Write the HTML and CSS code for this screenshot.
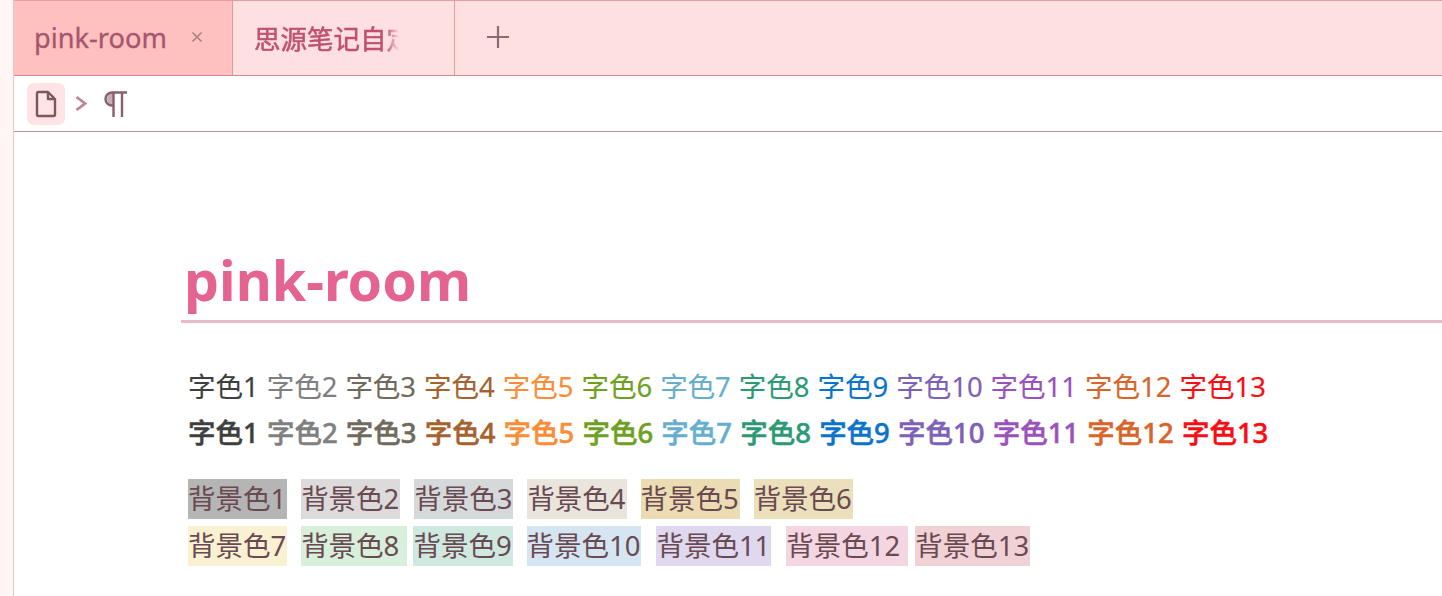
FILE: index.html
```html
<!DOCTYPE html>
<html lang="zh-CN">
<head>
    <meta charset="UTF-8">
    <title>pink-room</title>
    <link rel="stylesheet" href="styles.css">
</head>
<body>
    <div class="app">
        <div class="side"></div>
        <div class="main">
            <div class="tabbar">
                <div class="tab tab-active">
                    <span class="tab-title">pink-room</span>
                    <svg class="tab-close" width="12" height="12" viewBox="0 0 12 12"><path d="M1.500 1.500l9 9M10.500 1.500l-9 9" fill="none" stroke="#a98088" stroke-width="1.600"/></svg>
                </div>
                <div class="tab tab-other">
                    <span class="tab-title tab-fade">思源笔记自定</span>
                </div>
                <div class="tab-add">
                    <svg width="26" height="26" viewBox="0 0 26 26"><path d="M13 2v22M2 13h22" fill="none" stroke="#8c6a72" stroke-width="2.200"/></svg>
                </div>
            </div>
            <div class="crumbs">
                <div class="crumb-doc">
                    <svg width="22" height="28" viewBox="0 0 22 28"><path d="M2 3.500a1.500 1.500 0 0 1 1.500-1.500h9.500l7 7v15.500a1.500 1.500 0 0 1-1.500 1.500h-15a1.500 1.500 0 0 1-1.500-1.500zM13 2v7h7" fill="none" stroke="#7d5560" stroke-width="2.400" stroke-linejoin="round"/></svg>
                </div>
                <svg class="crumb-arrow" width="12" height="17" viewBox="0 0 12 17"><path d="M1.500 2l8.500 6.500-8.500 6.500" fill="none" stroke="#b98595" stroke-width="2.800"/></svg>
                <svg class="crumb-para" width="23" height="26" viewBox="0 0 23 26"><path d="M23 1.500H8a6.500 6.500 0 0 0 0 13h2" fill="none" stroke="#8a5f6c" stroke-width="2.400"/><path d="M9 2a6 6 0 0 0 0 12z" fill="#8a5f6c" fill-opacity="0.500"/><path d="M9.500 1v25M18 1v25" fill="none" stroke="#8a5f6c" stroke-width="2.400"/></svg>
            </div>
            <div class="doc">
                <h1 class="doc-title">pink-room</h1>
                <div class="fg-rows">
                    <p class="fg-row">
                        <span class="fg1">字色1</span> <span class="fg2">字色2</span> <span class="fg3">字色3</span> <span class="fg4">字色4</span> <span class="fg5">字色5</span> <span class="fg6">字色6</span> <span class="fg7">字色7</span> <span class="fg8">字色8</span> <span class="fg9">字色9</span> <span class="fg10">字色10</span> <span class="fg11">字色11</span> <span class="fg12">字色12</span> <span class="fg13">字色13</span>
                    </p>
                    <p class="fg-row fg-bold">
                        <span class="fg1">字色1</span> <span class="fg2">字色2</span> <span class="fg3">字色3</span> <span class="fg4">字色4</span> <span class="fg5">字色5</span> <span class="fg6">字色6</span> <span class="fg7">字色7</span> <span class="fg8">字色8</span> <span class="fg9">字色9</span> <span class="fg10">字色10</span> <span class="fg11">字色11</span> <span class="fg12">字色12</span> <span class="fg13">字色13</span>
                    </p>
                </div>
                <div class="bg-rows">
                    <div class="bg-row">
                        <span class="bg1">背景色1</span>
                        <span class="bg2">背景色2</span>
                        <span class="bg3">背景色3</span>
                        <span class="bg4">背景色4</span>
                        <span class="bg5">背景色5</span>
                        <span class="bg6">背景色6</span>
                    </div>
                    <div class="bg-row">
                        <span class="bg7">背景色7</span>
                        <span class="bg8 bg-trail">背景色8&nbsp;</span>
                        <span class="bg9">背景色9</span>
                        <span class="bg10">背景色10</span>
                        <span class="bg11">背景色11</span>
                        <span class="bg12 bg-trail">背景色12&nbsp;</span>
                        <span class="bg13">背景色13</span>
                    </div>
                </div>
            </div>
        </div>
    </div>
</body>
</html>
```
FILE: styles.css
```css
html, body {
    margin: 0;
    height: 596px;
    overflow: hidden;
    background: #fff;
    font-family: "Noto Sans", "Noto Sans CJK SC", sans-serif;
}
.app {
    display: flex;
    height: 596px;
}
.side {
    width: 13px;
    flex: none;
    background: #fff6f5;
    border-right: 1px solid #f0c4c6;
}
.main {
    flex: 1;
    min-width: 0;
}
.tabbar {
    display: flex;
    height: 76px;
    box-sizing: border-box;
    background: #ffe0e1;
    border-top: 1px solid #e39ea2;
    border-bottom: 1px solid #d08a92;
}
.tab {
    display: flex;
    align-items: center;
    box-sizing: border-box;
    border-right: 1px solid #d99aa2;
    padding-bottom: 2px;
}
.tab-active {
    width: 219px;
    padding-left: 20px;
    background: #ffc0c0;
    color: #a5566c;
    font-size: 27.200px;
    -webkit-text-stroke: 0.300px;
}
.tab-other {
    width: 222px;
    padding-left: 21px;
    color: #c05070;
    font-size: 26.500px;
    -webkit-text-stroke: 0.500px;
}
.tab-close {
    margin-left: 24px;
}
.tab-fade {
    white-space: nowrap;
    -webkit-mask-image: linear-gradient(to right, #000 132px, transparent 145px);
    mask-image: linear-gradient(to right, #000 132px, transparent 145px);
}
.tab-add {
    display: flex;
    align-items: center;
    padding-left: 30px;
    padding-bottom: 2px;
}
.crumbs {
    display: flex;
    align-items: center;
    height: 55px;
    padding-left: 13px;
    border-bottom: 1px solid #b9979f;
}
.crumb-doc {
    display: flex;
    align-items: center;
    justify-content: center;
    width: 38px;
    height: 42px;
    border-radius: 7px;
    background: #ffe3e5;
}
.crumb-arrow {
    margin-left: 10px;
}
.crumb-para {
    margin-left: 17px;
}
.doc {
    padding: 112px 0 0 167px;
}
.doc-title {
    margin: 0;
    padding: 0 0 4px 3px;
    border-bottom: 3px solid #e8b9c9;
    font-size: 55.500px;
    line-height: 72px;
    font-weight: 700;
    color: #e4638f;
}
.fg-rows {
    padding: 41px 0 0 7px;
}
.fg-row {
    margin: 0;
    height: 46px;
    font-size: 27.500px;
    line-height: 46px;
    word-spacing: 0.800px;
    white-space: nowrap;
    -webkit-text-stroke: 0.150px;
}
.fg-bold {
    word-spacing: 1px;
    font-weight: 500;
    -webkit-text-stroke: 0.500px;
}
.fg1 { color: #3f3f3f; }
.fg2 { color: #7f7f7f; }
.fg3 { color: #6f6a5c; }
.fg4 { color: #a5622e; }
.fg5 { color: #fb8c36; }
.fg6 { color: #6ea01f; }
.fg7 { color: #66aecd; }
.fg8 { color: #2b9a74; }
.fg9 { color: #0a73cc; }
.fg10 { color: #7e60b8; }
.fg11 { color: #9b51bc; }
.fg12 { color: #d9642a; }
.fg13 { color: #fb0b12; }
.bg-rows {
    padding: 23px 0 0 7px;
}
.bg-row {
    display: flex;
    gap: 14px;
    height: 47px;
    font-size: 27.500px;
    line-height: 40px;
    color: #6a4a52;
}
.bg-row span {
    height: 40px;
    padding-right: 0.900px;
}
.bg-row .bg-trail {
    margin-right: -7px;
}
.bg-row .bg8 {
    margin-right: -8px;
}
.bg-row .bg10, .bg-row .bg11 {
    margin-right: 1px;
}
.bg1 { background: #b5b5b5; }
.bg2 { background: #dcdadb; }
.bg3 { background: #d6d9da; }
.bg4 { background: #e9e5dc; }
.bg5 { background: #ecdcb4; }
.bg6 { background: #ecdfbc; }
.bg7 { background: #f9f1d2; }
.bg8 { background: #d8efdb; }
.bg9 { background: #cfe9e1; }
.bg10 { background: #d6e5f2; }
.bg11 { background: #dfd8ee; }
.bg12 { background: #f3d6e1; }
.bg13 { background: #f0d2d6; }
```
